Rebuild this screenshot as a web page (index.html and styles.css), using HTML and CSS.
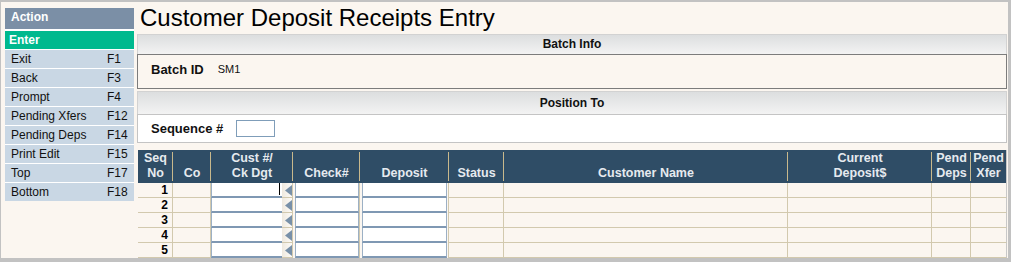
FILE: index.html
```html
<!DOCTYPE html>
<html lang="en">
<head>
<meta charset="utf-8">
<title>Customer Deposit Receipts Entry</title>
<link rel="stylesheet" href="styles.css">
</head>
<body>
<div class="window">
  <aside class="sidebar">
    <div class="side-head">Action</div>
    <div class="side-enter">Enter</div>
    <ul class="side-list">
      <li><span class="side-label">Exit</span><span class="key">F1</span></li>
      <li><span class="side-label">Back</span><span class="key">F3</span></li>
      <li><span class="side-label">Prompt</span><span class="key">F4</span></li>
      <li><span class="side-label">Pending Xfers</span><span class="key">F12</span></li>
      <li><span class="side-label">Pending Deps</span><span class="key">F14</span></li>
      <li><span class="side-label">Print Edit</span><span class="key">F15</span></li>
      <li><span class="side-label">Top</span><span class="key">F17</span></li>
      <li><span class="side-label">Bottom</span><span class="key">F18</span></li>
    </ul>
  </aside>
  <main class="main">
    <h1 class="title">Customer Deposit Receipts Entry</h1>
    <section class="panel">
      <div class="band">Batch Info</div>
      <div class="batch-box"><span class="label">Batch ID</span><span class="value">SM1</span></div>
    </section>
    <section class="panel panel-pos">
      <div class="band band-tall">Position To</div>
      <div class="seq-row"><span class="label">Sequence #</span><span class="seq-input"></span></div>
    </section>
    <div class="grid">
      <div class="th"><span>Seq<br>No</span></div>
      <div class="th"><span>Co</span></div>
      <div class="th"><span>Cust #/<br>Ck Dgt</span></div>
      <div class="th"><span>Check#</span></div>
      <div class="th"><span>Deposit</span></div>
      <div class="th"><span>Status</span></div>
      <div class="th"><span>Customer Name</span></div>
      <div class="th"><span>Current<br>Deposit$</span></div>
      <div class="th"><span>Pend<br>Deps</span></div>
      <div class="th th-last"><span>Pend<br>Xfer</span></div>

      <div class="td num">1</div><div class="td"></div>
      <div class="td cust"><span class="inp focus"><span class="caret"></span></span><span class="arrow"><svg class="tri" width="7" height="11" viewBox="0 0 7 11"><polygon points="7,0 0,5.5 7,11"/></svg></span></div>
      <div class="td field"><span class="inp"></span></div><div class="td field"><span class="inp"></span></div>
      <div class="td"></div><div class="td"></div><div class="td"></div><div class="td"></div><div class="td td-last"></div>

      <div class="td num">2</div><div class="td"></div>
      <div class="td cust"><span class="inp"></span><span class="arrow"><svg class="tri" width="7" height="11" viewBox="0 0 7 11"><polygon points="7,0 0,5.5 7,11"/></svg></span></div>
      <div class="td field"><span class="inp"></span></div><div class="td field"><span class="inp"></span></div>
      <div class="td"></div><div class="td"></div><div class="td"></div><div class="td"></div><div class="td td-last"></div>

      <div class="td num">3</div><div class="td"></div>
      <div class="td cust"><span class="inp"></span><span class="arrow"><svg class="tri" width="7" height="11" viewBox="0 0 7 11"><polygon points="7,0 0,5.5 7,11"/></svg></span></div>
      <div class="td field"><span class="inp"></span></div><div class="td field"><span class="inp"></span></div>
      <div class="td"></div><div class="td"></div><div class="td"></div><div class="td"></div><div class="td td-last"></div>

      <div class="td num">4</div><div class="td"></div>
      <div class="td cust"><span class="inp"></span><span class="arrow"><svg class="tri" width="7" height="11" viewBox="0 0 7 11"><polygon points="7,0 0,5.5 7,11"/></svg></span></div>
      <div class="td field"><span class="inp"></span></div><div class="td field"><span class="inp"></span></div>
      <div class="td"></div><div class="td"></div><div class="td"></div><div class="td"></div><div class="td td-last"></div>

      <div class="td num">5</div><div class="td"></div>
      <div class="td cust"><span class="inp"></span><span class="arrow"><svg class="tri" width="7" height="11" viewBox="0 0 7 11"><polygon points="7,0 0,5.5 7,11"/></svg></span></div>
      <div class="td field"><span class="inp"></span></div><div class="td field"><span class="inp"></span></div>
      <div class="td"></div><div class="td"></div><div class="td"></div><div class="td"></div><div class="td td-last"></div>
    </div>
  </main>
</div>
</body>
</html>
```
FILE: styles.css
```css
* { box-sizing: border-box; }
html, body { margin: 0; padding: 0; }
body {
  background: #c2c2c2;
  font-family: "Liberation Sans", Arial, sans-serif;
  color: #000;
  width: 1011px;
  height: 262px;
  overflow: hidden;
}
.window {
  display: flex;
  margin: 2px 3px 4px 1px;
  height: 256px;
  background: #fbf6f0;
  overflow: hidden;
}
.sidebar {
  width: 129px;
  margin: 6px 0 0 4px;
  flex: none;
}
.side-head {
  height: 21px;
  background: #7b8fa6;
  color: #fff;
  font-weight: bold;
  font-size: 12px;
  line-height: 19px;
  padding-left: 6px;
}
.side-enter {
  height: 20px;
  border-top: 2px solid #fff;
  background: #00b98e;
  color: #fff;
  font-weight: bold;
  font-size: 12px;
  line-height: 18px;
  padding-left: 4px;
}
.side-list {
  list-style: none;
  margin: 0;
  padding: 0;
}
.side-list li {
  display: flex;
  height: 19px;
  border-top: 1px solid #fff;
  background: #c9d7e4;
  font-size: 12px;
  line-height: 18px;
  color: #111;
}
.side-label { flex: 1; padding-left: 6px; }
.key { width: 27px; }

.main {
  flex: 1;
  margin-left: 3px;
  margin-right: 1px;
  display: flex;
  flex-direction: column;
  min-width: 0;
}
.title {
  margin: 0;
  height: 32px;
  font-size: 24px;
  font-weight: normal;
  line-height: 32px;
  padding-left: 3px;
  color: #000;
}
.band {
  height: 20px;
  border: 1px solid #d2d2d2;
  border-bottom: none;
  background: linear-gradient(#dcdedf, #f3f3f3);
  font-size: 12px;
  font-weight: bold;
  text-align: center;
  line-height: 19px;
  color: #111;
}
.band-tall { height: 23px; line-height: 22px; }
.batch-box {
  height: 35px;
  border: 1px solid #7c7c7c;
  display: flex;
  align-items: center;
  padding: 0 0 5px 13px;
  background: #fbf6f0;
}
.label { font-size: 13px; font-weight: bold; color: #111; }
.value { font-size: 11px; margin-left: 14px; color: #111; }
.panel-pos { margin-top: 2px; }
.seq-row {
  height: 29px;
  background: #fff;
  border: 1px solid #c4c4c4;
  display: flex;
  align-items: center;
  padding-left: 13px;
}
.seq-input {
  width: 39px;
  height: 17px;
  margin-left: 13px;
  border: 1px solid #7f9db9;
  background: #fff;
}

.grid {
  margin: 7px 0 0 1px;
  display: grid;
  grid-template-columns: 35px 38px 82px 67px 89px 55px 284px 144px 39px 1fr;
  grid-template-rows: 33px repeat(5, 15px);
}
.th {
  background:
    linear-gradient(#c9b98c, #c9b98c) right 0 top 2px / 1px 29px no-repeat,
    #2f4d66;
  color: #e6eaef;
  font-size: 12.5px;
  font-weight: bold;
  line-height: 15px;
  text-align: center;
  display: flex;
  align-items: flex-end;
  justify-content: center;
  padding-bottom: 2px;
  white-space: nowrap;
}
.th-last { background: #2f4d66; border-right: 1px solid #c8c8c8; }
.td {
  border-right: 1px solid #d2c9ae;
  border-bottom: 1px solid #d2c9ae;
  background: #fbf6f0;
}
.td-last { border-right: 1px solid #c8c8c8; }
.num {
  font-size: 12px;
  font-weight: bold;
  line-height: 14px;
  text-align: right;
  padding-right: 4px;
}
.cust {
  display: flex;
  border-bottom: none;
}
.inp {
  display: flex;
  height: 15px;
  background: #fff;
  border-left: 1px solid #9cb0c5;
  border-right: 1px solid #9cb0c5;
  border-bottom: 2px solid #7f98b3;
}
.cust .inp { flex: 1; border-right: none; }
.focus { justify-content: flex-end; align-items: flex-start; }
.caret {
  width: 1px;
  height: 12px;
  background: #000;
  margin-right: 2px;
}
.arrow {
  flex: none;
  width: 10px;
  height: 15px;
  border-bottom: 1px solid #d2c9ae;
  background: linear-gradient(90deg, #efe9df, #fdfbf8);
  display: flex;
  align-items: center;
  justify-content: flex-end;
}
.tri { display: block; fill: #7890a8; }
.field {
  border-bottom: none;
  padding: 0 0 0 2px;
  display: flex;
}
.field .inp { flex: 1; }
.grid > .field:nth-child(10n+5) { padding-right: 1px; }
```
